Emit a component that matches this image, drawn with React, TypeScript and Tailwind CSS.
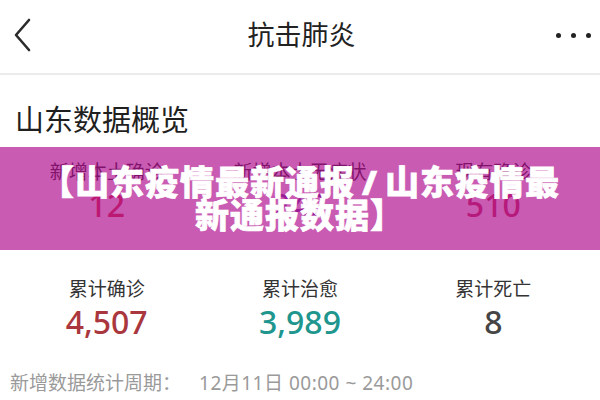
const overview = [
  { label: "累计确诊", value: "4,507", color: "text-[#a9373d]" },
  { label: "累计治愈", value: "3,989", color: "text-[#1e968e]" },
  { label: "累计死亡", value: "8", color: "text-[#454545]" },
];

const today = [
  { label: "新增本土确诊", value: "12", color: "text-[#d9434b]" },
  { label: "新增本土无症状", value: "242", color: "text-[#7a4fb0]" },
  { label: "现有确诊", value: "510", color: "text-[#c8455f]" },
];

function StatRow({
  items,
}: {
  items: { label: string; value: string; color: string }[];
}) {
  return (
    <div className="grid grid-cols-3 px-[10px]">
      {items.map((item) => (
        <div key={item.label} className="flex flex-col items-center">
          <span className="text-[19px] leading-[24px] text-[#333]">{item.label}</span>
          <span className={`mt-[3px] text-[32px] leading-[36px] font-medium ${item.color}`}>
            {item.value}
          </span>
        </div>
      ))}
    </div>
  );
}

export default function App() {
  return (
    <div
      className="relative w-[600px] h-[400px] overflow-hidden bg-white"
      style={{ fontFamily: '"Noto Sans", "Noto Sans CJK SC", sans-serif' }}
    >
      {/* Top bar */}
      <header className="flex h-[75px] items-center justify-between border-b-2 border-[#ebebeb] pl-[12px] pr-[9px] pb-[3px]">
        <div className="w-[40px]">
          <svg width="22" height="36" viewBox="0 0 22 36" fill="none">
            <path
              d="M17 3 L4 18 L17 33"
              stroke="#2b2b2b"
              strokeWidth="2.6"
              strokeLinecap="round"
              strokeLinejoin="round"
            />
          </svg>
        </div>
        <h1 className="text-[27px] leading-[32px] text-[#222]">抗击肺炎</h1>
        <div className="flex w-[40px] items-center justify-end gap-[10px]">
          <span className="size-[5px] rounded-full bg-[#222]" />
          <span className="size-[5px] rounded-full bg-[#222]" />
          <span className="size-[5px] rounded-full bg-[#222]" />
        </div>
      </header>

      <h2 className="mt-[30px] pl-[15px] text-[29px] leading-[30px] text-[#1f1f1f]">
        山东数据概览
      </h2>

      <div className="mt-[25px]">
        <StatRow items={today} />
      </div>

      <div className="mt-[54px]">
        <StatRow items={overview} />
      </div>

      <p className="mt-[31px] flex pl-[10px] text-[19px] leading-[24px] text-[#9a9a9a]">
        <span>新增数据统计周期：</span>
        <span className="ml-[18px] tracking-[0.5px]">12月11日 00:00 ~ 24:00</span>
      </p>

      {/* Headline banner */}
      <div className="absolute left-0 right-0 top-[147px] flex h-[103px] items-center justify-center bg-[#ac0389]/65">
        <p className="text-center text-[34px] leading-[33px] font-black tracking-[1px] text-white [-webkit-text-stroke:0.7px_white]">
          【山东疫情最新通报<span className="mx-[7px]">/</span>山东疫情最
          <br />
          新通报数据】
        </p>
      </div>
    </div>
  );
}
